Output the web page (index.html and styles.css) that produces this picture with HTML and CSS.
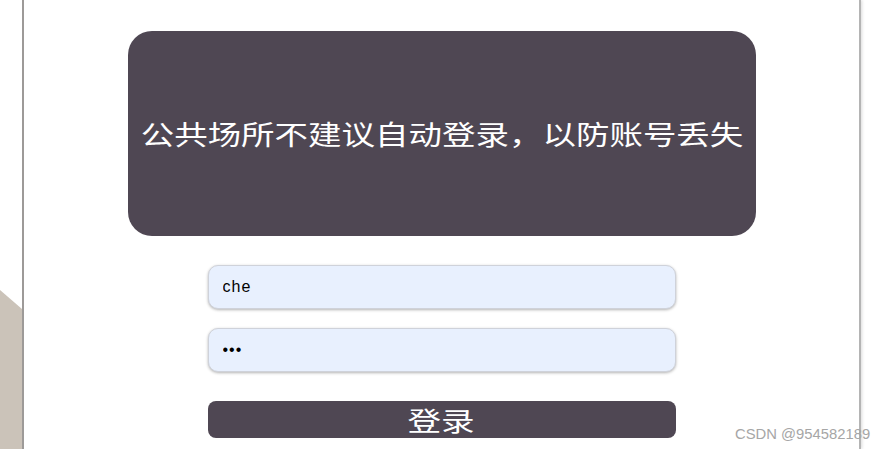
FILE: index.html
```html
<!DOCTYPE html>
<html lang="zh-CN">
<head>
  <meta charset="UTF-8" />
  <meta name="viewport" content="width=device-width, initial-scale=1" />
  <title>登录</title>
  <link rel="stylesheet" href="styles.css">
</head>
<body>
  <div class="page">
    <div class="side-left"></div>
    <div class="panel">
      <div class="notice">
        <span class="wide">公共场所不建议自动登录，以防账号丢失</span>
      </div>
      <form class="login-form">
        <input class="field" type="text" name="user" value="che" />
        <input class="field" type="password" name="pwd" value="123" />
        <button type="submit" class="login-btn"><span class="wide">登录</span></button>
      </form>
    </div>
    <div class="side-right"></div>
  </div>
  <div class="watermark">CSDN @954582189</div>
</body>
</html>
```

FILE: styles.css
```css
body {
  margin: 0;
  background: #fff;
  font-family: "Liberation Sans", "Noto Sans CJK SC", sans-serif;
  overflow: hidden;
}
.page {
  display: flex;
  height: 449px;
}
.side-left {
  width: 22px;
  position: relative;
  background: #fff;
}
.side-left::after {
  content: "";
  position: absolute;
  inset: 0;
  background: #cbc3b9;
  clip-path: polygon(0 290px, 100% 309px, 100% 100%, 0 100%);
}
.panel {
  width: 835px;
  background: #fff;
  border-left: 2px solid #9d9a98;
  border-right: 2px solid #b4b4b4;
  box-shadow: 1px 0 3px rgba(0,0,0,0.15);
  display: flex;
  flex-direction: column;
  align-items: center;
}
.side-right {
  flex: 1;
}
.wide {
  display: inline-block;
  transform: scaleX(1.29);
  font-family: "Noto Sans CJK SC", sans-serif;
}
.notice {
  margin-top: 31px;
  width: 628px;
  height: 205px;
  border-radius: 24px;
  background: #4f4753;
  color: #fff;
  font-size: 27px;
  display: flex;
  align-items: center;
  justify-content: center;
  white-space: nowrap;
}
.notice .wide {
  transform: scaleX(1.24);
}
.login-form {
  margin-top: 29px;
  display: flex;
  flex-direction: column;
  align-items: center;
}
.field {
  box-sizing: border-box;
  width: 468px;
  height: 44px;
  margin-bottom: 19px;
  padding: 0 14px;
  border: 1px solid #cfd2da;
  border-radius: 10px;
  background: #e8f0fe;
  box-shadow: 0 1px 3px rgba(0,0,0,0.3);
  font-family: "Liberation Sans", sans-serif;
  font-size: 16px;
  letter-spacing: 1px;
  color: #000;
  outline: none;
}
.login-btn {
  margin-top: 10px;
  width: 468px;
  height: 37px;
  padding: 0;
  border: none;
  border-radius: 8px;
  background: #4f4753;
  color: #fff;
  font-size: 26px;
  line-height: 37px;
  cursor: pointer;
}
.watermark {
  position: absolute;
  left: 735px;
  top: 426px;
  font-family: "Liberation Sans", sans-serif;
  font-size: 14.8px;
  color: #a6a6a6;
}
```
